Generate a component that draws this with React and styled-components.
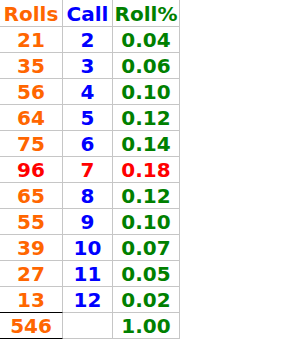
import React from "react";
import styled, { createGlobalStyle } from "styled-components";

const GlobalStyle = createGlobalStyle`
  html, body {
    margin: 0;
    padding: 0;
    background: #ffffff;
  }
`;

const Table = styled.div`
  display: grid;
  grid-template-columns: 63px 50px 67px;
  grid-auto-rows: 26px;
  grid-template-rows: 27px;
  font-family: "DejaVu Sans", Verdana, sans-serif;
  font-weight: 700;
  font-size: 20px;
`;

const Cell = styled.div`
  box-sizing: border-box;
  display: flex;
  align-items: center;
  justify-content: center;
  border-right: 1px solid #c6c6c6;
  border-bottom: 1px solid ${(p) => (p.$underline ? "#000000" : "#c6c6c6")};
  color: ${(p) => p.$color};
  white-space: nowrap;
  line-height: 1;
  padding-top: 1px;
`;

const ORANGE = "#ff6600";
const BLUE = "#0000ff";
const GREEN = "#008000";
const RED = "#ff0000";

const rows = [
  { rolls: 21, call: 2, pct: "0.04" },
  { rolls: 35, call: 3, pct: "0.06" },
  { rolls: 56, call: 4, pct: "0.10" },
  { rolls: 64, call: 5, pct: "0.12" },
  { rolls: 75, call: 6, pct: "0.14" },
  { rolls: 96, call: 7, pct: "0.18", hot: true },
  { rolls: 65, call: 8, pct: "0.12" },
  { rolls: 55, call: 9, pct: "0.10" },
  { rolls: 39, call: 10, pct: "0.07" },
  { rolls: 27, call: 11, pct: "0.05" },
  { rolls: 13, call: 12, pct: "0.02" },
];

export default function App() {
  return (
    <>
      <GlobalStyle />
      <Table>
        <Cell $color={ORANGE}>Rolls</Cell>
        <Cell $color={BLUE}>Call</Cell>
        <Cell $color={GREEN}>Roll%</Cell>
        {rows.map((r, i) => {
          const last = i === rows.length - 1;
          return (
            <React.Fragment key={r.call}>
              <Cell $color={r.hot ? RED : ORANGE} $underline={last}>
                {r.rolls}
              </Cell>
              <Cell $color={r.hot ? RED : BLUE}>{r.call}</Cell>
              <Cell $color={r.hot ? RED : GREEN}>{r.pct}</Cell>
            </React.Fragment>
          );
        })}
        <Cell $color={ORANGE} $underline>
          546
        </Cell>
        <Cell $color={BLUE} />
        <Cell $color={GREEN}>1.00</Cell>
      </Table>
    </>
  );
}
